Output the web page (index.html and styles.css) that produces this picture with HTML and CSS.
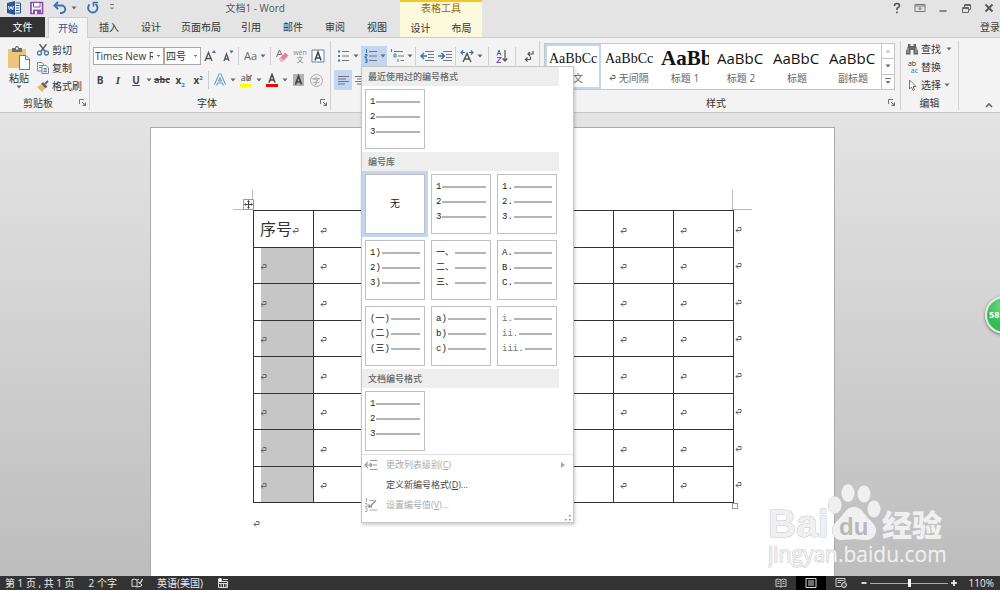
FILE: index.html
```html
<!DOCTYPE html>
<html lang="zh-CN">
<head>
<meta charset="utf-8">
<title>文档1 - Word</title>
<link rel="stylesheet" href="styles.css">
</head>
<body>
<svg class="sprite" aria-hidden="true">
  <symbol id="arr" viewBox="0 0 6 4"><path d="M.5.5h5L3 3.5z" fill="#6a6a6a"/></symbol>
  <symbol id="launch" viewBox="0 0 7 7"><path d="M.5 5V.5H5M3 3l2.500 2.500" stroke="#777" fill="none"/><path d="M7 3v4H3z" fill="#777"/></symbol>
  <symbol id="ret" viewBox="0 0 7 7"><path d="M3 .5h3v3H1M3 1.500l-2 2 2 2" stroke="#666" fill="none"/></symbol>
</svg>
<div class="app">
  <header class="header">
    <div class="head-left">
      <div class="titlebar">
        <div class="qat">
          <svg class="i14" viewBox="0 0 14 14"><path d="M0 2l8-2v14l-8-2z" fill="#2b579a"/><path d="M8.500 2h5v10h-5M9 4.500h3.500M9 7h3.500M9 9.500h3.500" stroke="#2b579a" fill="#fff"/><path d="M1.500 5l1 4 1.500-3.500L5.500 9l1-4" stroke="#fff" fill="none"/></svg>
          <button class="q" aria-label="保存"><svg class="i14" viewBox="0 0 14 14"><path d="M1 1.500h11.500v11H1z" fill="#fff" stroke="#8a4fb0" stroke-width="1.700"/><path d="M3.500 1.500h6.500v4.500H3.500z" fill="#fff" stroke="#8a4fb0"/><path d="M3 8.500h8V13H3z" fill="#8a4fb0"/><path d="M5 10h2v3H5z" fill="#fff"/></svg></button>
          <button class="q" aria-label="撤消"><svg class="i14" viewBox="0 0 14 14"><path d="M2 4.500h6.500a3.500 3.500 0 010 7.500H7" stroke="#3572b8" stroke-width="1.900" fill="none"/><path d="M5 1L1.500 4.500 5 8" stroke="#3572b8" stroke-width="1.900" fill="none"/></svg><svg class="arr"><use href="#arr"/></svg></button>
          <button class="q" aria-label="重复"><svg class="i14" viewBox="0 0 14 14"><path d="M9.500 3A4.700 4.700 0 113.500 3.500" stroke="#3572b8" stroke-width="1.900" fill="none"/><path d="M7.500 5.500V1.500h4.500" stroke="#3572b8" stroke-width="1.600" fill="none"/></svg></button>
          <button class="q" aria-label="自定义"><svg class="custom" viewBox="0 0 6 7"><path d="M1 .5h4" stroke="#777"/><path d="M1 3.500h4L3 5.500z" fill="#777"/></svg></button>
        </div>
        <div class="title">文档1 - Word</div>
      </div>
      <nav class="tabs">
        <button class="file">文件</button>
        <button class="tab on">开始</button>
        <button class="tab">插入</button>
        <button class="tab">设计</button>
        <button class="tab wide">页面布局</button>
        <button class="tab">引用</button>
        <button class="tab">邮件</button>
        <button class="tab">审阅</button>
        <button class="tab">视图</button>
      </nav>
    </div>
    <div class="context">
      <div class="context-name">表格工具</div>
      <nav class="context-tabs"><button class="tab">设计</button><button class="tab">布局</button></nav>
    </div>
    <div class="head-right">
      <div class="win">
        <button aria-label="帮助"><svg viewBox="0 0 12 12"><path d="M3.500 4q0-2.500 2.500-2.500T8.500 4Q8.500 5.200 6 6.300V8M6 9.500v1.700" stroke="#555" stroke-width="1.600" fill="none"/></svg></button>
        <button aria-label="功能区显示选项"><svg viewBox="0 0 12 12"><path d="M1 2.500h10v7H1zM1 4h10M6 8.500V5.500M4.500 7L6 5.500 7.500 7" stroke="#777" fill="none"/></svg></button>
        <button aria-label="最小化"><svg viewBox="0 0 12 12"><path d="M2.500 9h7" stroke="#666" stroke-width="1.500"/></svg></button>
        <button aria-label="还原"><svg viewBox="0 0 12 12"><path d="M2.500 5.500h6v5h-6zM2.500 6.500h6M4.500 5V2.500h6v5h-2M4.500 3.500h6" stroke="#666" fill="none"/></svg></button>
        <button aria-label="关闭"><svg viewBox="0 0 12 12"><path d="M2.500 2.500l7 7M9.500 2.500l-7 7" stroke="#555" stroke-width="1.800"/></svg></button>
      </div>
      <a class="login" href="#">登录</a>
    </div>
  </header>

  <section class="ribbon">
    <div class="group clip">
      <div class="clip-body">
        <button class="paste">
          <svg viewBox="0 0 24 26"><path d="M1 4h18v19H1z" fill="#ecc47a"/><path d="M5 3h3q0-2 2-2t2 2h3v4H5z" fill="#6b6b6b"/><path d="M9 2.500h2v2H9z" fill="#f3f3f3"/><path d="M12.500 10.500h6.500l3.500 3.500v10.500h-10z" fill="#fff" stroke="#777"/><path d="M18.500 10.500v4h4" fill="none" stroke="#777"/></svg>
          粘贴<svg class="arr"><use href="#arr"/></svg>
        </button>
        <div class="cmds">
          <button class="cmd"><svg viewBox="0 0 12 12"><path d="M2.500 0l6 8M9.500 0l-6 8" stroke="#555" stroke-width="1.300"/><circle cx="2.500" cy="9" r="2" fill="none" stroke="#3e7cb8" stroke-width="1.300"/><circle cx="9.500" cy="9" r="2" fill="none" stroke="#3e7cb8" stroke-width="1.300"/></svg>剪切</button>
          <button class="cmd"><svg viewBox="0 0 12 12"><path d="M.5.5H5L7 3v6H.5zM2 3.500h3M2 5.500h3" fill="#fff" stroke="#7b8794"/><path d="M5 3.500h4l2.500 2.500v5.500H5z" fill="#fff" stroke="#7b8794"/><path d="M6.500 6.500h3M6.500 8h3.500M6.500 9.700h3.500" stroke="#3e7cb8"/></svg>复制</button>
          <button class="cmd"><svg viewBox="0 0 12 12"><path d="M0 7l4-2.500 4 4L5 12z" fill="#ecb56a"/><path d="M4 4l2-2 4.500 4.500-2 2z" fill="#666"/><path d="M8 4l3-3" stroke="#666" stroke-width="2"/></svg>格式刷</button>
        </div>
      </div>
      <div class="foot"><span>剪贴板</span><svg class="launch"><use href="#launch"/></svg></div>
    </div>

    <div class="group font">
      <div class="rows">
        <div class="row first">
          <select class="combo face" aria-label="字体"><option>Times New Roman</option></select>
          <select class="combo size" aria-label="字号"><option>四号</option></select>
          <button class="b" aria-label="增大字号"><svg viewBox="0 0 14 14"><path d="M2 12L5.500 3.500 9 12M3.500 9.500h4" stroke="#555" stroke-width="1.400" fill="none"/><path d="M9 4l2-3 2 3z" fill="#3572b8"/></svg></button>
          <button class="b" aria-label="减小字号"><svg viewBox="0 0 14 14"><path d="M3 12l2.500-7L8 12M4 10h3" stroke="#555" stroke-width="1.300" fill="none"/><path d="M8.500 1.500h4l-2 3z" fill="#3572b8"/></svg></button>
          <i class="sep"></i>
          <button class="b aa">Aa<svg class="arr"><use href="#arr"/></svg></button>
          <i class="sep"></i>
          <button class="b" aria-label="清除格式"><svg viewBox="0 0 14 14"><path d="M1.500 8L4.500 1l2.500 5M3 5.500h3" stroke="#7a6a6e" fill="none"/><path d="M4 10l6-6.500 3.500 3L7.500 13H6z" fill="#e8849a"/><path d="M4 10l1.500-1.500L9 11.500 7.500 13H6z" fill="#f6bcc8"/></svg></button>
          <button class="b wen"><span>wén</span><span>文</span></button>
          <button class="b" aria-label="字符边框"><svg viewBox="0 0 14 14"><path d="M1 1h12v12H1z" fill="#fff" stroke="#5b86b5"/><path d="M4 11.500L7 3l3 8.500M5 9h4" stroke="#444" stroke-width="1.500" fill="none"/></svg></button>
        </div>
        <div class="row second">
          <button class="b"><b>B</b></button>
          <button class="b it">I</button>
          <button class="b un">U</button><button class="drop" aria-label="下划线选项"><svg class="arr"><use href="#arr"/></svg></button>
          <button class="b strike">abc</button>
          <button class="b"><b>x<sub>2</sub></b></button>
          <button class="b"><b>x<sup>2</sup></b></button>
          <i class="sep"></i>
          <button class="b" aria-label="文本效果"><svg viewBox="0 0 14 14"><path d="M2.500 12L7 2l4.500 10M4.500 9h5" stroke="#5b93d0" stroke-width="3.200" fill="none" stroke-linejoin="round"/><path d="M2.500 12L7 2l4.500 10M4.500 9h5" stroke="#fff" stroke-width="1.200" fill="none"/></svg></button><button class="drop" aria-label="文本效果选项"><svg class="arr"><use href="#arr"/></svg></button>
          <button class="b mark">ab<svg viewBox="0 0 14 14"><path d="M12.500 2L8 8" stroke="#888" stroke-width="2"/><path d="M1 11h12v3H1z" fill="#ff0"/></svg></button><button class="drop" aria-label="突出显示选项"><svg class="arr"><use href="#arr"/></svg></button>
          <button class="b" aria-label="字体颜色"><svg viewBox="0 0 14 14"><path d="M4 9.500L7 1.500l3 8M5 7h4" stroke="#444" stroke-width="1.500" fill="none"/><path d="M1 11h12v3H1z" fill="#f00"/></svg></button><button class="drop" aria-label="颜色选项"><svg class="arr"><use href="#arr"/></svg></button>
          <button class="b" aria-label="字符底纹"><svg viewBox="0 0 14 14"><path d="M2 1h11v12H2z" fill="#b3b3b3"/><path d="M4.500 11.500l3-8.500 3 8.500M5.500 9h4" stroke="#444" stroke-width="1.700" fill="none"/></svg></button>
          <button class="b"><span class="ring">字</span></button>
        </div>
      </div>
      <div class="foot"><span>字体</span><svg class="launch"><use href="#launch"/></svg></div>
    </div>

    <div class="group para">
      <div class="rows">
        <div class="row first">
          <button class="b" aria-label="项目符号"><svg viewBox="0 0 14 14"><path d="M2 1.500h2v2H2zM2 6h2v2H2zM2 10.500h2v2H2z" fill="#3e7cb8"/><path d="M6 2.500h7M6 7h7M6 11.500h7" stroke="#777"/></svg></button><button class="drop" aria-label="项目符号选项"><svg class="arr"><use href="#arr"/></svg></button>
          <div class="numbering">
            <button class="b" aria-label="编号"><svg viewBox="0 0 14 14"><path d="M3.500 0v4M2 5.500h2v1.500H2v1.500h2M2 10h2v3.500H2M2.500 11.700H4" stroke="#3572b8" fill="none"/><path d="M6 2.500h8M6 7h8M6 11.500h8" stroke="#777"/></svg></button><button class="drop" aria-label="编号选项"><svg class="arr"><use href="#arr"/></svg></button>
            <div class="menu">
              <h3>最近使用过的编号格式</h3>
              <div class="tiles">
                <button class="tile"><span>1</span><span>2</span><span>3</span></button>
              </div>
              <h3>编号库</h3>
              <div class="tiles">
                <button class="tile none">无</button>
                <button class="tile"><span>1</span><span>2</span><span>3</span></button>
                <button class="tile"><span>1.</span><span>2.</span><span>3.</span></button>
                <button class="tile"><span>1)</span><span>2)</span><span>3)</span></button>
                <button class="tile"><span>一、</span><span>二、</span><span>三、</span></button>
                <button class="tile"><span>A.</span><span>B.</span><span>C.</span></button>
                <button class="tile"><span>(一)</span><span>(二)</span><span>(三)</span></button>
                <button class="tile"><span>a)</span><span>b)</span><span>c)</span></button>
                <button class="tile light"><span>i.</span><span>ii.</span><span>iii.</span></button>
              </div>
              <h3>文档编号格式</h3>
              <div class="tiles">
                <button class="tile"><span>1</span><span>2</span><span>3</span></button>
              </div>
              <div class="items">
                <button class="item" disabled><svg viewBox="0 0 14 14"><path d="M6 2.500h7M9 7h4M6 11.500h7M1 7h7M4 4L1 7l3 3M6 5l2 2-2 2" stroke="#999" stroke-width="1.200" fill="none"/></svg><span>更改列表级别(<u>C</u>)</span><svg class="more" viewBox="0 0 4 6"><path d="M0 0l4 3-4 3z" fill="#aaa"/></svg></button>
                <button class="item"><i></i><span>定义新编号格式(<u>D</u>)...</span></button>
                <button class="item" disabled><svg viewBox="0 0 14 14"><path d="M2.500 0v4M1 5.500h2v3H1M1 10h2v3.500H1M5.500 2.500h5M5.500 12h8" stroke="#aaa" fill="none"/><path d="M5.500 9l6.500-6.500M5 6.500V9h3" stroke="#999" stroke-width="1.700" fill="none"/></svg><span>设置编号值(<u>V</u>)...</span></button>
              </div>
              <svg class="grip" viewBox="0 0 6 6"><path d="M4 0h1.500v1.500H4zM4 4h1.500v1.500H4zM0 4h1.500v1.500H0z" fill="#888"/></svg>
            </div>
          </div>
          <button class="b" aria-label="多级列表"><svg viewBox="0 0 14 14"><path d="M1.500 0v3M4 5h2v3H4zM8 10v3" stroke="#3e7cb8" fill="none"/><path d="M4 2.500h9M8 7h6M10.500 11.500H14" stroke="#777"/></svg></button><button class="drop" aria-label="多级列表选项"><svg class="arr"><use href="#arr"/></svg></button>
          <i class="sep"></i>
          <button class="b" aria-label="减少缩进量"><svg viewBox="0 0 14 14"><path d="M5 2.500h9M8 5.500h6M8 8.500h6M5 11.500h9" stroke="#777"/><path d="M1 7h6M4 4L1 7l3 3" stroke="#3572b8" stroke-width="1.400" fill="none"/></svg></button>
          <button class="b" aria-label="增加缩进量"><svg viewBox="0 0 14 14"><path d="M5 2.500h9M8 5.500h6M8 8.500h6M5 11.500h9" stroke="#777"/><path d="M0 7h6M3.500 4l3 3-3 3" stroke="#3572b8" stroke-width="1.400" fill="none"/></svg></button>
          <i class="sep"></i>
          <button class="b" aria-label="中文版式"><svg viewBox="0 0 14 14"><path d="M3 13l4-8.500L11 13M4.500 10h5" stroke="#555" stroke-width="1.400" fill="none"/><path d="M1 3.500h4M3 1.500l-2 2 2 2M9 3.500h4M11 1.500l2 2-2 2" stroke="#3572b8" stroke-width="1.200" fill="none"/></svg></button><button class="drop" aria-label="中文版式选项"><svg class="arr"><use href="#arr"/></svg></button>
          <i class="sep wide"></i>
          <button class="b" aria-label="排序"><svg viewBox="0 0 14 14"><path d="M2 6.500l2-5.500 2 5.500M2.700 4.500h2.600" stroke="#3572b8" fill="none"/><path d="M2 8.500h4l-4 5h4" stroke="#8a4fb0" stroke-width="1.200" fill="none"/><path d="M10 1v11M7.700 9.500L10 12l2.300-2.500" stroke="#555" stroke-width="1.200" fill="none"/></svg></button>
          <i class="sep wide"></i>
          <button class="b" aria-label="显示编辑标记"><svg viewBox="0 0 14 14"><path d="M11 2v3H6M8 3L6 5l2 2M8.500 7.500v3H3.500M5.500 8.500l-2 2 2 2" stroke="#555" stroke-width="1.200" fill="none"/></svg></button>
        </div>
        <div class="row second">
          <button class="b on" aria-label="左对齐"><svg viewBox="0 0 14 14"><path d="M2 3.500h11M2 6h8M2 8.500h11M2 11h7" stroke="#777"/></svg></button>
          <button class="b" aria-label="居中"><svg viewBox="0 0 14 14"><path d="M1 3.500h12M3 6h8M1 8.500h12M3 11h8" stroke="#777"/></svg></button>
        </div>
      </div>
    </div>

    <div class="group styles">
      <div class="gallery">
        <button class="style on"><span class="sample serif">AaBbCc</span><span class="name">正文</span></button>
        <button class="style"><span class="sample serif">AaBbCc</span><span class="name"><svg class="ret"><use href="#ret"/></svg> 无间隔</span></button>
        <button class="style"><span class="sample h1">AaBb</span><span class="name">标题 1</span></button>
        <button class="style"><span class="sample">AaBbC</span><span class="name">标题 2</span></button>
        <button class="style"><span class="sample">AaBbC</span><span class="name">标题</span></button>
        <button class="style"><span class="sample">AaBbC</span><span class="name">副标题</span></button>
        <div class="scroll">
          <button aria-label="上一行"><svg class="arr up"><use href="#arr"/></svg></button>
          <button aria-label="下一行"><svg class="arr"><use href="#arr"/></svg></button>
          <button aria-label="其他"><svg class="custom" viewBox="0 0 6 7"><path d="M0 .5h6" stroke="#777"/><path d="M.5 3h5L3 6z" fill="#777"/></svg></button>
        </div>
      </div>
      <div class="foot"><span>样式</span><svg class="launch"><use href="#launch"/></svg></div>
    </div>

    <div class="group edit">
      <div class="cmds">
        <button class="cmd"><svg viewBox="0 0 12 12"><path d="M2 1h2.500v2H7.500V1H10v2l2 5v3.500H7.500V7h-3v4.500H0V8l2-5z" fill="#666"/><path d="M2 5v5M10 5v5" stroke="#ddd" stroke-width=".7"/></svg>查找<svg class="arr far"><use href="#arr"/></svg></button>
        <button class="cmd"><span class="swap"><span>ab</span><span class="to">ac</span></span>替换</button>
        <button class="cmd"><svg viewBox="0 0 12 12"><path d="M3.500 1v9l2-2 1.500 3.500 1.500-.7L7 7.500h3z" fill="#fff" stroke="#777"/></svg>选择<svg class="arr"><use href="#arr"/></svg></button>
      </div>
      <div class="foot"><span>编辑</span></div>
    </div>
    <button class="collapse" aria-label="折叠功能区"><svg viewBox="0 0 8 6"><path d="M1 5l3-3 3 3" stroke="#666" stroke-width="1.600" fill="none"/></svg></button>
  </section>

  <main class="canvas">
    <article class="page">
      <div class="sheet">
        <span class="corner left"></span><span class="corner right"></span>
        <svg class="move" viewBox="0 0 11 11"><path d="M.5.5h10v10H.5z" fill="#fff" stroke="#999"/><path d="M5.500 2v7M2 5.500h7" stroke="#444"/><path d="M5.500 1L4 3h3zM5.500 10L4 8h3zM1 5.500L3 4v3zM10 5.500L8 4v3z" fill="#444"/></svg>
        <table class="grid">
          <tbody>
            <tr><td class="head">序号<svg class="ret"><use href="#ret"/></svg></td><td></td><td></td><td></td><td></td><td></td><td></td><td></td><td class="end"></td></tr>
            <tr><td></td><td></td><td></td><td></td><td></td><td></td><td></td><td></td><td class="end"></td></tr>
            <tr><td></td><td></td><td></td><td></td><td></td><td></td><td></td><td></td><td class="end"></td></tr>
            <tr><td></td><td></td><td></td><td></td><td></td><td></td><td></td><td></td><td class="end"></td></tr>
            <tr><td></td><td></td><td></td><td></td><td></td><td></td><td></td><td></td><td class="end"></td></tr>
            <tr><td></td><td></td><td></td><td></td><td></td><td></td><td></td><td></td><td class="end"></td></tr>
            <tr><td></td><td></td><td></td><td></td><td></td><td></td><td></td><td></td><td class="end"></td></tr>
            <tr><td></td><td></td><td></td><td></td><td></td><td></td><td></td><td></td><td class="end"></td></tr>
          </tbody>
        </table>
        <span class="resize"></span>
      </div>
      <p class="after"><svg class="ret"><use href="#ret"/></svg></p>
    </article>
    <svg class="watermark" viewBox="0 0 180 88">
      <g class="wm-white">
        <text class="wm-bai" x="0" y="54">Bai</text>
        <ellipse cx="67" cy="22" rx="6.500" ry="8.500"/><ellipse cx="80" cy="10" rx="6.500" ry="9"/><ellipse cx="96" cy="11" rx="6.500" ry="8.500"/><ellipse cx="106" cy="26" rx="6.500" ry="8.500"/>
        <path d="M86 24c8 0 11 9 17 14 9 8 5 19-5 19-5 0-8-1-12-1s-7 1-12 1c-10 0-13-11-5-19 6-5 9-14 17-14z"/>
        <text class="wm-cn" x="114" y="53">经验</text>
        <text class="wm-url" x="0" y="79">jingyan.baidu.com</text>
      </g>
      <text class="wm-du" x="71" y="52">du</text>
    </svg>
    <div class="ball">58</div>
  </main>

  <footer class="status">
    <span>第 1 页 , 共 1 页</span>
    <span>2 个字</span>
    <svg viewBox="0 0 12 10"><path d="M6 2Q3.500.5 1 1.500v7Q3.500 7.500 6 9V2l2-.8M6 9l4.500-1V6" stroke="#ddd" fill="none"/><path d="M7.500 4l1.500 1.500L11.500 1" stroke="#ddd" stroke-width="1.300" fill="none"/></svg>
    <span>英语(美国)</span>
    <svg viewBox="0 0 12 10"><path d="M1.500 3.500h9v6h-9zM1.500 5.500h9M4 5v4M6.500 5v4M9 5v4" stroke="#ddd" fill="none"/><circle cx="3" cy="2" r="2" fill="#fff"/><path d="M6 1.500h5" stroke="#ddd"/></svg>
    <div class="views">
      <button aria-label="阅读视图"><svg viewBox="0 0 12 10"><path d="M6 2Q3.500.5 1 1.500v7Q3.500 7.500 6 9Q8.500 7.500 11 8.500v-7Q8.500.5 6 2v7M2.500 3.500h2M2.500 5.500h2M7.500 3.500h2M7.500 5.500h2" stroke="#ccc" fill="none"/></svg></button>
      <button class="on" aria-label="页面视图"><svg viewBox="0 0 12 10"><path d="M1 .5h10v9H1zM3 3h6M3 5h6M3 7h6" stroke="#ddd" fill="none"/></svg></button>
      <button aria-label="Web 版式视图"><svg viewBox="0 0 12 10"><path d="M6 8.500H1v-8h9V4M2.500 2.500h6M2.500 4.500H6" stroke="#ccc" fill="none"/><circle cx="9" cy="7" r="2.500" fill="#555" stroke="#ddd"/></svg></button>
    </div>
    <div class="zoom">
      <button class="step" aria-label="缩小"><svg viewBox="0 0 8 8"><path d="M1.500 4h5" stroke="#fff" stroke-width="1.600"/></svg></button>
      <input type="range" min="10" max="210" value="112" aria-label="显示比例">
      <button class="step" aria-label="放大"><svg viewBox="0 0 8 8"><path d="M1 4h6M4 1v6" stroke="#fff" stroke-width="1.600"/></svg></button>
    </div>
    <span class="pct">110%</span>
  </footer>
</div>
</body>
</html>
```
FILE: styles.css
```css
* { box-sizing: border-box; }
body {
  margin: 0;
  font: 10px/14px "Open Sans", "Noto Sans CJK SC", sans-serif;
  color: #333;
}
button, select {
  font: inherit;
  color: inherit;
  background: none;
  border: 0;
  padding: 0;
  margin: 0;
}
button { display: flex; align-items: center; justify-content: center; white-space: nowrap; }
.sprite { display: none; }
.app { display: flex; flex-direction: column; min-height: 100vh; overflow: hidden; }
.arr { width: 6px; height: 4px; flex: none; }
.launch, .ret { width: 7px; height: 7px; }
.custom { width: 6px; height: 7px; }
.i14 { width: 14px; height: 14px; }

/* header */
.header { display: flex; background: #e4e4e4; height: 38px; border-bottom: 1px solid #cfcfcf; }
.head-left { width: 400px; display: flex; flex-direction: column; }
.titlebar { height: 18px; display: flex; align-items: center; justify-content: space-between; padding: 0 115px 2px 7px; }
.title { color: #555; }
.qat { display: flex; align-items: center; gap: 9px; }
.qat .q { gap: 4px; }
.tabs { display: flex; height: 20px; }
.tab { width: 42px; height: 20px; }
.tab.wide { width: 58px; }
.file { width: 45px; margin-right: 3px; background: #333; color: #fff; }
.tab.on { width: 40px; background: #f3f3f3; border: 1px solid #cfcfcf; border-bottom: 0; color: #2b579a; position: relative; height: 21px; }
.context { width: 82px; background: #fdf9dc; border-top: 2px solid #f3c81e; }
.context-name { text-align: center; color: #8c6d10; height: 16px; line-height: 13px; }
.context-tabs { display: flex; height: 19px; }
.context-tabs .tab { flex: 1; }
.head-right { flex: 1; display: flex; flex-direction: column; align-items: flex-end; }
.win { display: flex; height: 18px; padding-bottom: 2px; }
.win button { width: 23px; }
.win svg { width: 12px; height: 12px; }
.login { color: #444; text-decoration: none; line-height: 18px; }

/* ribbon */
.ribbon { display: flex; height: 75px; background: #f3f3f3; border-bottom: 1px solid #c4c4c4; padding: 3px 0 2px; position: relative; z-index: 2; }
.group { display: flex; flex-direction: column; border-right: 1px solid #d2d2d2; }
.clip { width: 90px; }
.font { width: 241px; padding-left: 1px; }
.para { width: 209px; }
.styles { width: 361px; padding: 0 5px 0 4px; }
.edit { width: 58px; }
.foot { margin-top: auto; height: 15px; display: flex; align-items: center; padding: 0 3px; }
.foot span { flex: 1; text-align: center; }
.clip .foot span { padding-right: 6px; }
.styles .foot { padding: 0; }
.clip-body { display: flex; padding: 2px 0 0 5px; gap: 4px; }
.paste { flex-direction: column; width: 28px; height: 48px; line-height: 14px; }
.paste > svg:first-child { width: 24px; height: 26px; }
.cmds { display: flex; flex-direction: column; }
.clip .cmds { gap: 4px; }
.cmd { height: 14px; justify-content: flex-start; gap: 3px; }
.cmd > svg:first-child { width: 12px; height: 12px; }
.edit .cmds { padding: 1px 0 0 5px; gap: 4px; }
.cmd .far { margin-left: 2px; }
.swap { width: 12px; font-size: 7px; line-height: 7px; display: flex; flex-direction: column; }
.swap .to { color: #3572b8; text-align: right; }

.rows { display: flex; flex-direction: column; gap: 4px; padding-top: 5px; }
.row { display: flex; align-items: center; height: 20px; }
.font .first { padding-left: 2px; }
.b { width: 18px; height: 20px; flex: none; color: #444; }
.b svg:not(.arr) { width: 14px; height: 14px; }
.b.on { background: #c2d5f2; }
.b.aa { width: 28px; gap: 3px; font-size: 11px; color: #666; }
.it { font: italic bold 11px/14px "Liberation Serif", serif; }
.un { font-weight: bold; text-decoration: underline; }
.strike { font-size: 9px; font-weight: bold; text-decoration: line-through; }
.b sub, .b sup { font-size: 6px; line-height: 6px; color: #3572b8; }
.wen { flex-direction: column; font-size: 7px; line-height: 7px; color: #888; }
.mark { position: relative; font-size: 9px; line-height: 9px; padding-bottom: 5px; }
.mark svg { position: absolute; inset: 3px 2px; }
.ring { width: 13px; height: 13px; border: 1px solid #b5a5b0; border-radius: 50%; font-size: 8px; line-height: 11px; color: #888; text-align: center; }
.drop { width: 8px; height: 20px; }
.sep { width: 1px; height: 18px; margin: 0 2px 0 1px; background: #d0d0d0; }
.sep.wide { margin: 0 4px; }
.combo { appearance: none; height: 18px; border: 1px solid #ababab; border-radius: 0; padding: 0 10px 0 1px; background: linear-gradient(#777, #777) right 3px top 7px / 3px 1px no-repeat, linear-gradient(#777, #777) right 4px top 8px / 1px 1px no-repeat, #fff; }
.face { width: 71px; }
.size { width: 37px; }
.para .rows { padding-left: 3px; }
.numbering { position: relative; display: flex; width: 26px; background: #c2d5f2; margin: 0 1px; }

/* numbering menu */
.menu { position: absolute; top: 100%; left: 0; width: 213px; background: #fff; border: 1px solid #c6c6c6; box-shadow: 1px 2px 3px #0003; z-index: 5; }
.menu h3 { margin: 0 14px 0 0; padding: 0 6px; font-size: 9px; line-height: 19px; font-weight: 500; color: #666; background: #eee; }
.tiles { display: flex; flex-wrap: wrap; gap: 6px; padding: 3px; }
.tile { width: 60px; height: 60px; display: flex; flex-direction: column; align-items: stretch; border: 1px solid #c0c0c0; background: #fff; padding: 0 4px 4px; font: 9px/15px "Liberation Mono", "Noto Sans CJK SC", monospace; color: #222; }
.tile span { display: flex; align-items: center; gap: 1px; height: 15px; }
.tile span::after { content: ""; flex: 1; height: 2px; background: #b4b4b4; }
.tile.none { align-items: center; padding: 0; font-size: 10px; box-shadow: 0 0 0 3px #c2d5f2; }
.tile.light { color: #777; }
.items { border-top: 1px solid #e1e1e1; }
.item { width: 100%; height: 20px; justify-content: flex-start; gap: 8px; padding: 0 8px 0 2px; font-size: 9px; color: #444; }
.item svg:first-child, .item i { width: 14px; height: 14px; }
.item span { flex: 1; text-align: left; }
.item:disabled { color: #aaa; }
.item .more { width: 4px; height: 6px; }
.grip { display: block; width: 6px; height: 6px; margin: 0 2px 1px auto; }

/* style gallery */
.gallery { display: flex; height: 47px; margin-top: 2px; border: 1px solid #c6c6c6; background: #fff; }
.style { width: 56px; padding: 0 4px 4px; flex-direction: column; justify-content: flex-end; flex: none; }
.style.on { box-shadow: inset 0 0 0 2px #c2d5f2; }
.sample { width: 100%; height: 25px; text-align: left; font-size: 15px; line-height: 25px; color: #111; }
.sample.serif { font-size: 14px; font-family: "Liberation Serif", serif; }
.sample.h1 { font: bold 21px/25px "Liberation Serif", serif; overflow: hidden; }
.name { line-height: 14px; color: #666; }
.scroll { flex: 1; display: flex; flex-direction: column; border-left: 1px solid #c6c6c6; }
.scroll button { flex: 1; }
.scroll button + button { border-top: 1px solid #c6c6c6; }
.up { transform: rotate(180deg); opacity: .4; }
.collapse { margin: auto 7px 0 auto; height: 10px; }
.collapse svg { width: 8px; height: 6px; }

/* document */
.canvas { flex: 1; display: flex; justify-content: center; position: relative; padding: 14px 15px 0 0; background: linear-gradient(#e4e4e4, #bdbdbd); overflow: hidden; }
.page { width: 100%; max-width: 685px; background: #fff; border: 1px solid #ababab; border-bottom: 0; padding: 82px 82px 0 102px; }
.sheet { position: relative; width: 479px; }
.corner { position: absolute; top: -20px; width: 20px; height: 20px; border-bottom: 1px solid #bbb; }
.corner.left { right: 100%; border-right: 1px solid #bbb; }
.corner.right { left: 100%; border-left: 1px solid #bbb; }
.move { position: absolute; top: -11px; left: -10px; width: 11px; height: 11px; }
.resize { position: absolute; top: 100%; left: 100%; width: 6px; height: 6px; border: 1px solid #999; background: #fff; }
.grid { width: 489px; height: 293px; table-layout: fixed; border-collapse: collapse; }
.grid tr { height: 36px; }
.grid td {
  width: 60px;
  border: 1px solid #333;
  padding: 0 0 0 6px;
  background: url("data:image/svg+xml,%3Csvg xmlns='http://www.w3.org/2000/svg' width='7' height='7'%3E%3Cpath d='M3 .5h3v3H1M3 1.500l-2 2 2 2' stroke='%23666' fill='none'/%3E%3C/svg%3E") 6px 58% no-repeat;
}
.grid tr + tr td:first-child { background-color: #c6c6c6; box-shadow: inset 7px 0 #fff; }
.grid .head { background: none; font-size: 16px; line-height: 20px; white-space: nowrap; }
.grid .end { width: 10px; border: 0; border-left: 1px solid #333; background-position: 1px 55%; }
.after { margin: 14px 0 0; }

.watermark { position: absolute; right: 52px; bottom: 5px; width: 180px; height: 88px; pointer-events: none; }
.wm-white { fill: #f0f0f0; stroke: #c8c8c8; stroke-width: 1px; paint-order: stroke; }
.wm-bai { font: bold 39px "Liberation Sans", sans-serif; }
.wm-cn { font: 900 30px "Noto Sans CJK SC", sans-serif; }
.wm-url { font: 21px "Open Sans", sans-serif; }
.wm-du { font: bold 24px "Liberation Sans", sans-serif; fill: #b8b8b8; }
.ball { position: absolute; right: -23px; top: 183px; width: 38px; height: 38px; border: 2px solid #e8e8e8; border-radius: 50%; background: radial-gradient(circle at 50% 20%, #6fdc83, #35bd54 60%); color: #fff; font-size: 9px; font-weight: bold; line-height: 34px; padding-left: 2px; box-shadow: 0 1px 3px #0008; }

/* status bar */
.status { display: flex; align-items: center; height: 14px; background: #333; color: #eee; padding: 0 6px 0 5px; gap: 14px; }
.status svg { width: 12px; height: 10px; }
.views { display: flex; margin-left: auto; }
.views button { width: 30px; height: 14px; }
.views .on { background: #000; }
.zoom { display: flex; align-items: center; gap: 2px; margin-left: -10px; }
.zoom .step svg { width: 8px; height: 8px; }
.zoom input { appearance: none; width: 78px; height: 10px; margin: 0; background: linear-gradient(#aaa, #aaa) center / 100% 1px no-repeat; }
.zoom input::-webkit-slider-thumb { appearance: none; width: 3px; height: 8px; background: #fff; }
.pct { margin-left: -3px; }
```
